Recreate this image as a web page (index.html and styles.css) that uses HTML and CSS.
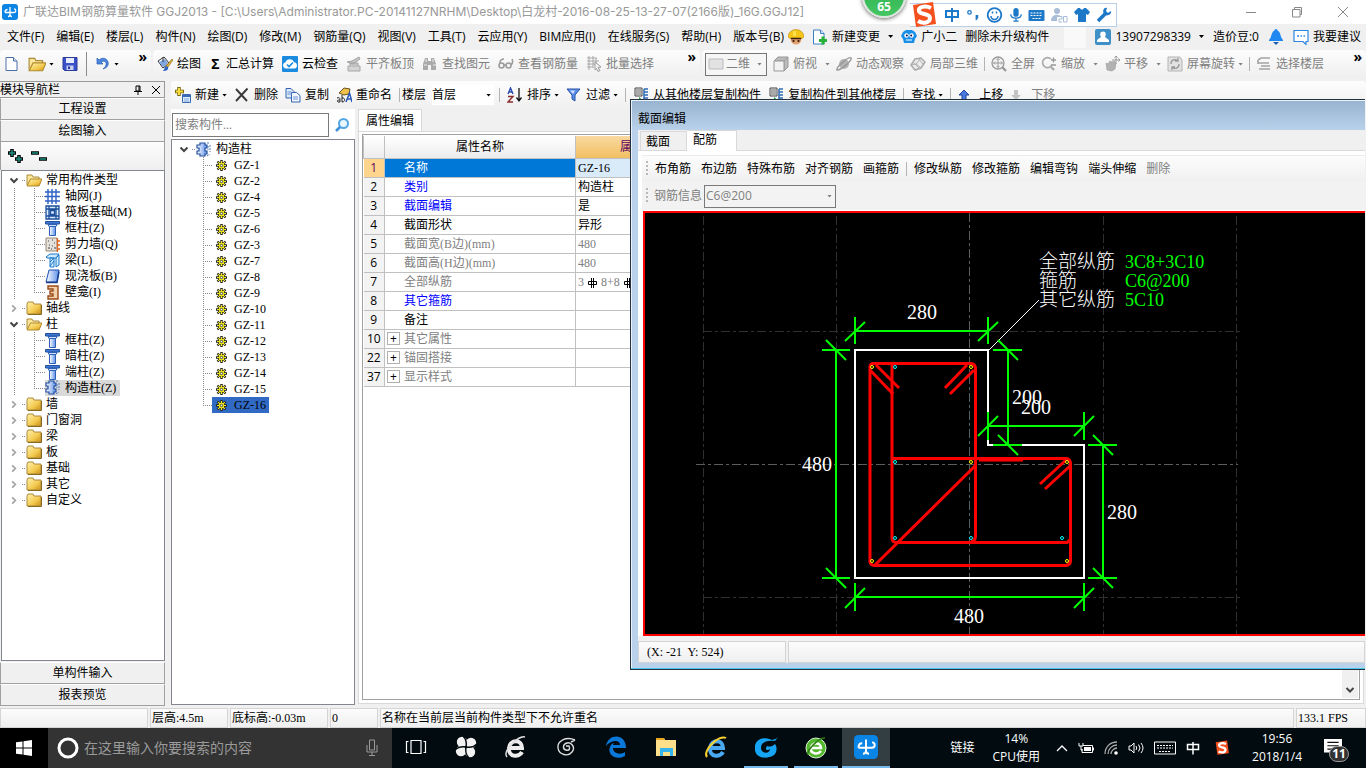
FILE: index.html
```html
<!DOCTYPE html>
<html lang="zh-CN">
<head>
<meta charset="utf-8">
<title>广联达BIM钢筋算量软件 GGJ2013</title>
<link rel="stylesheet" href="styles.css">
</head>
<body>
<svg class="defs" aria-hidden="true">
  <defs>
    <linearGradient id="gGold" x1="0" y1="0" x2="1" y2="1"><stop offset="0" stop-color="#fff3b0"/><stop offset=".6" stop-color="#f3c94e"/><stop offset="1" stop-color="#c98f1c"/></linearGradient>
    <linearGradient id="gBlue" x1="0" y1="0" x2="1" y2="0"><stop offset="0" stop-color="#fff"/><stop offset="1" stop-color="#5d8fe8"/></linearGradient>
  </defs>
  <symbol id="app" viewBox="0 0 16 16"><rect width="16" height="16" rx="3" fill="#0a85e6"/><path d="M3 8.500h9a1.800 1.800 0 0 0 0-3.600M8 3v7.500a2 2 0 0 0 2 2M3 8.500c0-2 1-3 2.500-3M8 10.500a2 2 0 0 1-2 2" fill="none" stroke="#fff" stroke-width="1.300"/></symbol>
  <symbol id="folder" viewBox="0 0 16 14"><path d="M1 3l1-2h5l1 2h7v10H1z" fill="url(#gGold)" stroke="#a98a3a"/><path d="M15.500 4v9.500H2" fill="none" stroke="#8a6a20"/></symbol>
  <symbol id="folder-open" viewBox="0 0 16 14"><path d="M1 12V2h5l1 2h6v2" fill="#fbe79a" stroke="#a98a3a"/><path d="M1 13L4.500 6H16l-3 7z" fill="url(#gGold)" stroke="#b08a2c"/></symbol>
  <symbol id="chev-d" viewBox="0 0 10 8"><path d="M1.500 2l3.500 3.500L8.500 2" fill="none" stroke="#444" stroke-width="2"/></symbol>
  <symbol id="chev-r" viewBox="0 0 8 10"><path d="M2 1.500L5.500 5 2 8.500" fill="none" stroke="#a0a0a0" stroke-width="1.800"/></symbol>
  <symbol id="grid" viewBox="0 0 15 15"><path d="M3 0v15M7 0v15M11 0v15M0 3h15M0 7.500h15M0 12h15" stroke="#2d60c4" stroke-width="1.400"/></symbol>
  <symbol id="raft" viewBox="0 0 15 15"><path d="M1 1h13v13H1zM4 1v13M11 1v13M1 4h13M1 11h13M5.500 5.500h4v4h-4z" fill="#dcebfa" stroke="#1c4f9c" stroke-width="1.300"/></symbol>
  <symbol id="column" viewBox="0 0 15 15"><path d="M.500 .500h14v2.500h-14z" fill="#3f78d0" stroke="#2450a0"/><path d="M3 3.500h9l-1 2H4z" fill="#cfe0fa" stroke="#2e60b8"/><path d="M4.500 5.500h6v9h-6z" fill="url(#gBlue)" stroke="#2e60b8"/></symbol>
  <symbol id="wall" viewBox="0 0 15 15"><path d="M1 1h11v13H1z" fill="#e4e0da" stroke="#9a8878"/><path d="M3 4h1M7 3h1M9 6h1M4 8h1M7 9h1M3 11h2M6 12h1M9 11h2" stroke="#444"/><path d="M12.500 1v14M12 4h3M12 8h3M12 12h3" stroke="#e0641c" stroke-width="1.300"/></symbol>
  <symbol id="beam" viewBox="0 0 15 15"><path d="M1 4l4-3h9l-3 4H2zM5 5h4v9H5zM11 5l3-3v10l-3 2z" fill="#cfeaff" stroke="#1c78c8"/><path d="M9 5L5 9m0 4l4-5" stroke="#1c78c8"/></symbol>
  <symbol id="slab" viewBox="0 0 15 15"><path d="M4 1h10l-2 12H1z" fill="url(#gBlue)" stroke="#1c4fb0"/><path d="M1 13.500h11l2-11" fill="none" stroke="#173f90" stroke-width="1.500"/></symbol>
  <symbol id="niche" viewBox="0 0 15 15"><path d="M3 1h10v13H3v-3h5V9H5V6h3V4H3z" fill="#f3d3ae" stroke="#9a4a18" stroke-width="1.400"/></symbol>
  <symbol id="gz" viewBox="0 0 15 15"><path d="M4 1h5v2h2v3H9v3h2v3H9v2H4v-2H1V9h2V6H1V3h3z" fill="url(#gBlue)" stroke="#234f9e" stroke-width="1.200"/><path d="M11 1h3M11 14l3-2M12 4v4M14 3v7" stroke="#4c78bc" stroke-dasharray="2 1"/></symbol>
  <symbol id="gear" viewBox="0 0 11 11"><path d="M5.500 0v11M0 5.500h11M1.500 1.500l8 8M9.500 1.500l-8 8" stroke="#222" stroke-width="2.400"/><circle cx="5.500" cy="5.500" r="3.800" fill="#222"/><path d="M5.500 1v9M1 5.500h9M2.200 2.200l6.600 6.600M8.800 2.200l-6.600 6.600" stroke="#f7ef1e" stroke-width="1.200"/><circle cx="5.500" cy="5.500" r="2.400" fill="none" stroke="#f7ef1e"/><circle cx="5.500" cy="5.500" r="1.200" fill="#fff" stroke="#222" stroke-width=".8"/></symbol>
  <symbol id="doc" viewBox="0 0 16 16"><path d="M2 1.500h7.500L13 5v9.500H2z" fill="#fff" stroke="#4a6fa8"/><path d="M9.500 1.500V5H13" fill="#dbe6f5" stroke="#4a6fa8"/></symbol>
  <symbol id="save" viewBox="0 0 16 16"><path d="M1 1.500h14v13H2.500L1 13z" fill="#3a50c8" stroke="#2a3a98"/><path d="M4 2h8v5H4z" fill="#e8ecfa"/><path d="M4.500 9.500h7V14h-7z" fill="#c7cef0"/><path d="M6 10.500h2V13H6z" fill="#2a3a98"/></symbol>
  <symbol id="undo" viewBox="0 0 16 16"><path d="M2 2v6h6L6 6c3-2 6 0 5 3-.500 2-2 3-3 4 4-1 6-4 5-7C12 2 7 1 4 4z" fill="#4d86de" stroke="#2a5cb4" stroke-width=".7"/></symbol>
  <symbol id="paint" viewBox="0 0 16 16"><path d="M1 5l6-4 5 6-6 5z" fill="#fff" stroke="#333"/><path d="M2 6l6-3 3 4-5 4z" fill="#7fa6e0"/><path d="M6 1V6" stroke="#333"/><path d="M15 3L9 10l2 1 5-7z" fill="#e9b93a" stroke="#7a5a18" stroke-width=".6"/><path d="M9 10c-2 1-1 3-3 5 3 0 6-1 5-4z" fill="#2e62c0"/></symbol>
  <symbol id="cloudcheck" viewBox="0 0 16 16"><rect width="16" height="16" rx="1" fill="#1b8be0"/><path d="M4 12.500a3.200 3.200 0 0 1-.5-6.300 4.500 4.500 0 0 1 8.500 0 3.200 3.200 0 0 1 .5 6.300z" fill="#fff"/><path d="M5 8.500l2 2 4-4" stroke="#1b8be0" stroke-width="1.600" fill="none"/></symbol>
  <symbol id="g-align" viewBox="0 0 16 16"><path d="M2 10h12v5H2z" fill="#d4d4d4" stroke="#a6a6a6"/><path d="M4 10V7h8v3M1 6l5-1 7-4 1 2-7 5z" fill="#c4c4c4" stroke="#a6a6a6"/></symbol>
  <symbol id="g-find" viewBox="0 0 16 16"><path d="M3 2h3v3h3V2h3l2 6v6H9V9H6v5H1V8z" fill="#aaa"/><path d="M2 9h3M11 9h3M4 3v3M11 3v3" stroke="#eee"/></symbol>
  <symbol id="g-glasses" viewBox="0 0 16 16"><g fill="none" stroke="#9c9c9c" stroke-width="1.600"><circle cx="3.500" cy="9.500" r="2.500"/><circle cx="10.500" cy="9.500" r="2.500"/><path d="M6 9h2M2 7c0-3 2-4 4-4M13 9c2-2 2-4 1-6"/></g></symbol>
  <symbol id="g-batch" viewBox="0 0 16 16"><path d="M1 2h10M1 5h12M1 8h10M1 11h6M3 0v14M7 0v12M10 2v5" stroke="#a8a8a8"/><path d="M9 6l6 5-3 .5 2 3-2 1-1.500-3L9 14z" fill="#f4f4f4" stroke="#999"/></symbol>
  <symbol id="g-rect" viewBox="0 0 16 16"><path d="M1 3h14v10H1z" fill="#e2e2e2" stroke="#bbb"/></symbol>
  <symbol id="g-cube" viewBox="0 0 16 16"><path d="M1 5l4-4h10l-4 4zM11 5l4-4v10l-4 4z" fill="#bbb" stroke="#999"/><path d="M1 5h10v10H1z" fill="#f2f2f2" stroke="#999"/></symbol>
  <symbol id="g-orbit" viewBox="0 0 16 16"><circle cx="8" cy="8" r="5" fill="#b4b4b4"/><path d="M1 14C0 11 13 0 15 2s-11 13-14 12z" fill="none" stroke="#999" stroke-width="1.500"/></symbol>
  <symbol id="g-part" viewBox="0 0 16 16"><path d="M1 9l4-6 6-1 4 4-4 6-6 2z" fill="#ececec" stroke="#aaa" stroke-width="1.500"/><path d="M1 9l5-1 5-6M6 8l5 4M3 6l6 6M8 2l5 6" stroke="#b0b0b0" fill="none"/></symbol>
  <symbol id="g-full" viewBox="0 0 16 16"><circle cx="7" cy="7" r="6" fill="#f5f5f5" stroke="#999" stroke-width="1.300"/><path d="M7 2.500v9M2.500 7h9M5.500 4L7 2.500 8.500 4M5.500 10L7 11.500 8.500 10M4 5.500L2.500 7 4 8.500M10 5.500L11.500 7 10 8.500" fill="none" stroke="#999"/><path d="M11.500 11.500L15 15" stroke="#999" stroke-width="2.400"/></symbol>
  <symbol id="g-zoom" viewBox="0 0 16 16"><path d="M10 3a5 5 0 1 0 1 6" fill="none" stroke="#aaa" stroke-width="1.600"/><path d="M10 11l3 3" stroke="#aaa" stroke-width="2.400"/><path d="M10 4h5M12.500 1.500v5M10 9h5" stroke="#999" stroke-width="1.300"/></symbol>
  <symbol id="g-pan" viewBox="0 0 16 16"><path d="M2 7l2 1 2-3 2 1 2-1 2 2-1 6-3 2-5-1z" fill="#b2b2b2" stroke="#999" stroke-width=".6"/><path d="M12 0v8M8 4h8M10.500 1.500L12 0l1.500 1.500M14.500 2.500L16 4l-1.500 1.500" stroke="#999" fill="none"/></symbol>
  <symbol id="g-rot" viewBox="0 0 16 16"><path d="M1 1h12l2 3v11H1z" fill="#e2e2e2" stroke="#b4b4b4"/><path d="M4 8a4 4 0 0 1 7-3M12 8a4 4 0 0 1-7 3M11 2v3H8M5 14v-3h3" fill="none" stroke="#999" stroke-width="1.300"/></symbol>
  <symbol id="g-floors" viewBox="0 0 16 16"><path d="M2 4l3-2h9M2 7h11M5 10h9M3 13h11M2 4v4" fill="none" stroke="#a4a4a4" stroke-width="1.600"/></symbol>
  <symbol id="newitem" viewBox="0 0 16 16"><path d="M4 0v9M0 4.500h9" stroke="#7a6a10" stroke-width="3.500"/><path d="M4 1v7M1 4.500h7" stroke="#f6dc3c" stroke-width="2"/><path d="M7.500 7.500h8v8h-8z" fill="#dcecff" stroke="#3a6ab4"/><path d="M8 9h7" stroke="#3a6ab4" stroke-width="2"/><path d="M9 12h5M9 14h5" stroke="#7fa4d8"/></symbol>
  <symbol id="del" viewBox="0 0 16 16"><path d="M2 2l11 12M13.500 1.500L2 14" stroke="#3a3a3a" stroke-width="1.900"/></symbol>
  <symbol id="copy" viewBox="0 0 16 16"><path d="M1 1.500h5l3 3V11H1z" fill="#dbe8fa" stroke="#3664b0"/><path d="M6.500 5.500h5l3.500 3V15H6.500z" fill="#f2f7ff" stroke="#3664b0"/><path d="M2.500 5h4M2.500 7h4M8 10h5M8 12h5" stroke="#6c94d4"/></symbol>
  <symbol id="rename" viewBox="0 0 16 16"><path d="M3 6l5-5 6 1-1 5-5 1z" fill="#eec04a" stroke="#6a5020"/><path d="M10 15l3.500-9L16 15M11 12h4" fill="none" stroke="#2a58b8" stroke-width="1.500"/><path d="M1 11c3-1 3 0 3 4H2c-2-2 1-2 2-2M6 8v7c4 0 3-5 0-4" fill="none" stroke="#222"/></symbol>
  <symbol id="sort" viewBox="0 0 16 16"><path d="M1 7l2.500-6L6 7M2 5h3" fill="none" stroke="#2a4cb0" stroke-width="1.400"/><path d="M1 9.500h5l-5 5.500h5" fill="none" stroke="#8a2c2c" stroke-width="1.400"/><path d="M12 1v12M9.500 10.500L12 14l2.500-3.500" fill="none" stroke="#111" stroke-width="1.300"/></symbol>
  <symbol id="filter" viewBox="0 0 16 16"><path d="M1 2h13L9 8v6l-3-2V8z" fill="#5a8ee8" stroke="#2550a8"/><path d="M4 3.500h5L7 7z" fill="#cfe0ff"/></symbol>
  <symbol id="floorcopy" viewBox="0 0 16 16"><path d="M2 1h7v8H2z" fill="#eee" stroke="#444"/><path d="M3 3h5M3 5h5M3 7h5" stroke="#666"/><path d="M11 2h4M11 5h4M11 8h4M11 11h4M11 14h4M11 2v12" stroke="#2f6cb4" stroke-width="1.500"/><path d="M1 13h5V10l4 3.500L6 16z" fill="#18a038"/></symbol>
  <symbol id="up" viewBox="0 0 12 12"><path d="M6 1l5 5H8v5H4V6H1z" fill="#4a7ae0" stroke="#1f449c"/></symbol>
  <symbol id="down" viewBox="0 0 12 12"><path d="M6 11L1 6h3V1h4v5h3z" fill="#c4c4c4"/></symbol>
  <symbol id="magn" viewBox="0 0 16 16"><circle cx="9.500" cy="6.500" r="4.500" fill="#e8f6ff" stroke="#52a6e4" stroke-width="2"/><path d="M6 10l-4 4" stroke="#3c90d8" stroke-width="2.500"/></symbol>
  <symbol id="worker" viewBox="0 0 16 16"><circle cx="8" cy="10" r="5.500" fill="#e0a070"/><path d="M0 8a8 7.500 0 0 1 16 0l-2 1.500H2z" fill="#f5c518" stroke="#b8860b" stroke-width=".6"/><path d="M5 2h3v5H5z" fill="#ffe14a"/><path d="M3 9.500h10" stroke="#3a1d10" stroke-width="1.500"/><path d="M5.500 11v2M10.500 11v2" stroke="#3a1d10" stroke-width="1.800"/></symbol>
  <symbol id="docplus" viewBox="0 0 16 16"><path d="M1.500 1h7L12 4.500V15H1.500z" fill="#fff" stroke="#3b7fc4"/><path d="M8.500 1v3.500H12" fill="#cfe2f5" stroke="#3b7fc4"/><path d="M11 7.500v8M7 11.500h8" stroke="#27b137" stroke-width="3"/></symbol>
  <symbol id="mascot" viewBox="0 0 16 16"><path d="M2 3l3-2h6l3 2 2 4-2 3-1 4H3L2 10 0 7z" fill="#1a8fe8"/><circle cx="5.500" cy="6.500" r="2.200" fill="#fff"/><circle cx="10.500" cy="6.500" r="2.200" fill="#fff"/><circle cx="5.800" cy="6.500" r="1" fill="#114"/><circle cx="10.200" cy="6.500" r="1" fill="#114"/><path d="M5 11h6" stroke="#fff"/></symbol>
  <symbol id="person" viewBox="0 0 16 16"><rect width="16" height="16" rx="2" fill="#3f8fc8"/><path d="M8 2.500c3 0 3.500 3 2 5.500L14 11v2H2v-2l4-3c-1.500-2.500-1-5.500 2-5.500z" fill="#fff"/></symbol>
  <symbol id="bell" viewBox="0 0 16 16"><path d="M8 0c1 0 1.500 1 1.500 1.500C13 3 12 8 15 11v1H1v-1C4 8 3 3 6.500 1.500 6.500 1 7 0 8 0z" fill="#1f87f0"/><path d="M5 13h6l-3 3z" fill="#1f5fb0"/></symbol>
  <symbol id="chat" viewBox="0 0 16 16"><path d="M1 1.500h14v11H13v3l-3-3H1z" fill="#fff" stroke="#2b86e4" stroke-width="1.200"/><path d="M4 7h2M7.500 7h1.500M10.500 7H12" stroke="#2b86e4" stroke-width="1.500"/></symbol>
  <symbol id="sogou" viewBox="0 0 28 28"><path d="M3 4L23 1l3 22-20 3z" fill="#f4511e"/><path d="M21 7C15 4 8 6 9 10s11 2 11 7-7 6-12 3" fill="none" stroke="#fff" stroke-width="4"/></symbol>
</svg>

<header class="titlebar">
  <svg class="i16"><use href="#app"/></svg>
  <span class="title">广联达BIM钢筋算量软件 GGJ2013 - [C:\Users\Administrator.PC-20141127NRHM\Desktop\白龙村-2016-08-25-13-27-07(2166版)_16G.GGJ12]</span>
  <button class="win" aria-label="最小化"><svg viewBox="0 0 12 12" width="12" height="12"><path d="M1 6.500h10" stroke="#888"/></svg></button>
  <button class="win" aria-label="还原"><svg viewBox="0 0 12 12" width="12" height="12"><path d="M3.500 3V1.500h7v7H9M1.500 3.500H9V11H1.500z" fill="none" stroke="#888"/></svg></button>
  <button class="win" aria-label="关闭"><svg viewBox="0 0 12 12" width="12" height="12"><path d="M1 1l10 10M11 1L1 11" stroke="#888"/></svg></button>
</header>

<nav class="menubar">
  <div class="menus"><button>文件(F)</button><button>编辑(E)</button><button>楼层(L)</button><button>构件(N)</button><button>绘图(D)</button><button>修改(M)</button><button>钢筋量(Q)</button><button>视图(V)</button><button>工具(T)</button><button>云应用(Y)</button><button>BIM应用(I)</button><button>在线服务(S)</button><button>帮助(H)</button><button>版本号(B)</button></div>
  <div class="extras">
    <svg class="i16"><use href="#worker"/></svg>
    <button class="tb"><svg class="i16"><use href="#docplus"/></svg>新建变更<i class="caret wide"></i></button>
    <button class="tb"><svg class="i16"><use href="#mascot"/></svg>广小二</button>
    <button>删除未升级构件</button>
  </div>
  <div class="account">
    <button class="tb"><svg class="i16"><use href="#person"/></svg>13907298339<i class="caret wide"></i></button>
    <button>造价豆:0</button>
    <svg class="i16"><use href="#bell"/></svg>
    <button class="tb"><svg class="i16"><use href="#chat"/></svg>我要建议</button>
  </div>
</nav>

<div class="bars">
  <div class="bar bar-file">
    <button class="tb" aria-label="新建"><svg class="i16"><use href="#doc"/></svg></button>
    <button class="tb" aria-label="打开"><svg class="i18"><use href="#folder-open"/></svg><i class="caret"></i></button>
    <button class="tb" aria-label="保存"><svg class="i16"><use href="#save"/></svg></button>
    <i class="sep tall"></i>
    <button class="tb" aria-label="撤销"><svg class="i16"><use href="#undo"/></svg><i class="caret"></i></button>
    <span class="more">»</span>
  </div>
  <div class="bar bar-edit">
    <button class="tb"><svg class="i16"><use href="#paint"/></svg>绘图</button>
    <button class="tb"><b class="sigma">Σ</b>汇总计算</button>
    <button class="tb"><svg class="i16"><use href="#cloudcheck"/></svg>云检查</button>
    <button class="tb" disabled><svg class="i16"><use href="#g-align"/></svg>平齐板顶</button>
    <button class="tb" disabled><svg class="i16"><use href="#g-find"/></svg>查找图元</button>
    <button class="tb" disabled><svg class="i16"><use href="#g-glasses"/></svg>查看钢筋量</button>
    <button class="tb" disabled><svg class="i16"><use href="#g-batch"/></svg>批量选择</button>
    <span class="more">»</span>
  </div>
  <div class="bar bar-view">
    <label class="combo dim"><svg class="i16"><use href="#g-rect"/></svg><select aria-label="视图模式" disabled><option>二维</option></select><i class="caret"></i></label>
    <button class="tb" disabled><svg class="i16"><use href="#g-cube"/></svg>俯视<i class="caret wide"></i></button>
    <button class="tb" disabled><svg class="i16"><use href="#g-orbit"/></svg>动态观察</button>
    <button class="tb" disabled><svg class="i16"><use href="#g-part"/></svg>局部三维</button>
    <i class="sep"></i>
    <button class="tb" disabled><svg class="i16"><use href="#g-full"/></svg>全屏</button>
    <button class="tb" disabled><svg class="i16"><use href="#g-zoom"/></svg>缩放<i class="caret wide"></i></button>
    <button class="tb" disabled><svg class="i16"><use href="#g-pan"/></svg>平移<i class="caret wide"></i></button>
    <button class="tb" disabled><svg class="i16"><use href="#g-rot"/></svg>屏幕旋转<i class="caret"></i></button>
    <i class="sep"></i>
    <button class="tb" disabled><svg class="i16"><use href="#g-floors"/></svg>选择楼层</button>
    <span class="more">»</span>
  </div>
</div>

<main class="work">
  <aside class="nav song">
    <div class="nav-head"><span>模块导航栏</span>
      <svg class="pin" viewBox="0 0 10 10" width="10" height="10"><path d="M3 1h4v5H3zM6 1v5M1 6.500h8M5 7v3" fill="none" stroke="#000"/></svg>
      <svg viewBox="0 0 10 10" width="10" height="10"><path d="M1 1l8 8M9 1L1 9" stroke="#000"/></svg></div>
    <button class="nav-btn">工程设置</button>
    <button class="nav-btn">绘图输入</button>
    <div class="nav-tools"><svg viewBox="0 0 40 16" width="40" height="16"><path d="M1 5h8M5 1v8M8 11h8M12 7v8M24 5h8M32 11h8" stroke="#000" stroke-width="3.500"/><path d="M2 5h6M5 2v6M9 11h6M12 8v6M25 5h6M33 11h6" stroke="#1b8f80" stroke-width="1.500"/></svg></div>
    <ul class="tree nav-tree">
      <li class="l1"><svg class="chev"><use href="#chev-d"/></svg><i class="dot"></i><svg class="fold"><use href="#folder-open"/></svg>常用构件类型</li>
      <li class="l2"><i class="stub"></i><svg class="i15"><use href="#grid"/></svg><span>轴网(J)</span></li>
      <li class="l2"><i class="stub"></i><svg class="i15"><use href="#raft"/></svg><span>筏板基础(M)</span></li>
      <li class="l2"><i class="stub"></i><svg class="i15"><use href="#column"/></svg><span>框柱(Z)</span></li>
      <li class="l2"><i class="stub"></i><svg class="i15"><use href="#wall"/></svg><span>剪力墙(Q)</span></li>
      <li class="l2"><i class="stub"></i><svg class="i15"><use href="#beam"/></svg><span>梁(L)</span></li>
      <li class="l2"><i class="stub"></i><svg class="i15"><use href="#slab"/></svg><span>现浇板(B)</span></li>
      <li class="l2"><i class="stub last"></i><svg class="i15"><use href="#niche"/></svg><span>壁龛(I)</span></li>
      <li class="l1"><svg class="chev"><use href="#chev-r"/></svg><i class="dot"></i><svg class="fold"><use href="#folder"/></svg>轴线</li>
      <li class="l1"><svg class="chev"><use href="#chev-d"/></svg><i class="dot"></i><svg class="fold"><use href="#folder-open"/></svg>柱</li>
      <li class="l2"><i class="stub"></i><svg class="i15"><use href="#column"/></svg><span>框柱(Z)</span></li>
      <li class="l2"><i class="stub"></i><svg class="i15"><use href="#column"/></svg><span>暗柱(Z)</span></li>
      <li class="l2"><i class="stub"></i><svg class="i15"><use href="#column"/></svg><span>端柱(Z)</span></li>
      <li class="l2"><i class="stub last"></i><span class="hot"><svg class="i15"><use href="#gz"/></svg><span>构造柱(Z)</span></span></li>
      <li class="l1"><svg class="chev"><use href="#chev-r"/></svg><i class="dot"></i><svg class="fold"><use href="#folder"/></svg>墙</li>
      <li class="l1"><svg class="chev"><use href="#chev-r"/></svg><i class="dot"></i><svg class="fold"><use href="#folder"/></svg>门窗洞</li>
      <li class="l1"><svg class="chev"><use href="#chev-r"/></svg><i class="dot"></i><svg class="fold"><use href="#folder"/></svg>梁</li>
      <li class="l1"><svg class="chev"><use href="#chev-r"/></svg><i class="dot"></i><svg class="fold"><use href="#folder"/></svg>板</li>
      <li class="l1"><svg class="chev"><use href="#chev-r"/></svg><i class="dot"></i><svg class="fold"><use href="#folder"/></svg>基础</li>
      <li class="l1"><svg class="chev"><use href="#chev-r"/></svg><i class="dot"></i><svg class="fold"><use href="#folder"/></svg>其它</li>
      <li class="l1"><svg class="chev"><use href="#chev-r"/></svg><i class="dot"></i><svg class="fold"><use href="#folder"/></svg>自定义</li>
    </ul>
    <button class="nav-btn">单构件输入</button>
    <button class="nav-btn">报表预览</button>
  </aside>

  <section class="right">
    <div class="bar bar-comp">
      <button class="tb"><svg class="i16"><use href="#newitem"/></svg>新建<i class="caret"></i></button>
      <button class="tb"><svg class="i16"><use href="#del"/></svg>删除</button>
      <button class="tb"><svg class="i16"><use href="#copy"/></svg>复制</button>
      <button class="tb"><svg class="i16"><use href="#rename"/></svg>重命名</button>
      <i class="sep"></i>
      <label class="floor">楼层<span class="combo plain"><select><option>首层</option></select><i class="caret"></i></span></label>
      <i class="sep"></i>
      <button class="tb"><svg class="i16"><use href="#sort"/></svg>排序<i class="caret"></i></button>
      <button class="tb"><svg class="i16"><use href="#filter"/></svg>过滤<i class="caret"></i></button>
      <i class="sep"></i>
      <button class="tb"><svg class="i16"><use href="#floorcopy"/></svg>从其他楼层复制构件</button>
      <button class="tb"><svg class="i16"><use href="#floorcopy"/></svg>复制构件到其他楼层</button>
      <i class="sep"></i>
      <button class="tb">查找<i class="caret"></i></button>
      <i class="sep"></i>
      <button class="tb move"><svg class="i12"><use href="#up"/></svg>上移</button>
      <button class="tb move" disabled><svg class="i12"><use href="#down"/></svg>下移</button>
    </div>
    <div class="panes">
      <div class="complist song">
        <div class="search"><input type="text" aria-label="搜索构件" placeholder="搜索构件..."><button aria-label="搜索"><svg class="i16"><use href="#magn"/></svg></button></div>
        <ul class="tree comp-tree">
          <li class="l1"><svg class="chev"><use href="#chev-d"/></svg><i class="dot"></i><svg class="i15"><use href="#gz"/></svg>构造柱</li>
          <li class="c2"><i class="stub"></i><span><svg class="i11"><use href="#gear"/></svg>GZ-1</span></li>
          <li class="c2"><i class="stub"></i><span><svg class="i11"><use href="#gear"/></svg>GZ-2</span></li>
          <li class="c2"><i class="stub"></i><span><svg class="i11"><use href="#gear"/></svg>GZ-4</span></li>
          <li class="c2"><i class="stub"></i><span><svg class="i11"><use href="#gear"/></svg>GZ-5</span></li>
          <li class="c2"><i class="stub"></i><span><svg class="i11"><use href="#gear"/></svg>GZ-6</span></li>
          <li class="c2"><i class="stub"></i><span><svg class="i11"><use href="#gear"/></svg>GZ-3</span></li>
          <li class="c2"><i class="stub"></i><span><svg class="i11"><use href="#gear"/></svg>GZ-7</span></li>
          <li class="c2"><i class="stub"></i><span><svg class="i11"><use href="#gear"/></svg>GZ-8</span></li>
          <li class="c2"><i class="stub"></i><span><svg class="i11"><use href="#gear"/></svg>GZ-9</span></li>
          <li class="c2"><i class="stub"></i><span><svg class="i11"><use href="#gear"/></svg>GZ-10</span></li>
          <li class="c2"><i class="stub"></i><span><svg class="i11"><use href="#gear"/></svg>GZ-11</span></li>
          <li class="c2"><i class="stub"></i><span><svg class="i11"><use href="#gear"/></svg>GZ-12</span></li>
          <li class="c2"><i class="stub"></i><span><svg class="i11"><use href="#gear"/></svg>GZ-13</span></li>
          <li class="c2"><i class="stub"></i><span><svg class="i11"><use href="#gear"/></svg>GZ-14</span></li>
          <li class="c2"><i class="stub"></i><span><svg class="i11"><use href="#gear"/></svg>GZ-15</span></li>
          <li class="c2"><i class="stub last"></i><span class="sel"><svg class="i11"><use href="#gear"/></svg>GZ-16</span></li>
        </ul>
      </div>
      <div class="props song">
        <button class="ptab">属性编辑</button>
        <div class="ppanel">
          <div class="pbox">
            <table>
              <thead><tr><th class="n"></th><th class="k">属性名称</th><th class="v">属性值</th></tr></thead>
              <tbody>
                <tr class="cur"><th>1</th><td>名称</td><td>GZ-16</td></tr>
                <tr class="blue"><th>2</th><td>类别</td><td>构造柱</td></tr>
                <tr class="blue"><th>3</th><td>截面编辑</td><td>是</td></tr>
                <tr><th>4</th><td>截面形状</td><td>异形</td></tr>
                <tr class="gray"><th>5</th><td>截面宽(B边)(mm)</td><td>480</td></tr>
                <tr class="gray"><th>6</th><td>截面高(H边)(mm)</td><td>480</td></tr>
                <tr class="gray"><th>7</th><td>全部纵筋</td><td>3 <svg class="rebar" viewBox="0 0 11 10"><path d="M1.500 3.500h8v3h-8zM4.500 0v10M6.500 0v10" fill="none" stroke="#000"/></svg> 8+8 <svg class="rebar" viewBox="0 0 11 10"><path d="M1.500 3.500h8v3h-8zM4.500 0v10M6.500 0v10" fill="none" stroke="#000"/></svg> 10</td></tr>
                <tr class="blue"><th>8</th><td>其它箍筋</td><td></td></tr>
                <tr><th>9</th><td>备注</td><td></td></tr>
                <tr class="gray grp"><th>10</th><td><button aria-label="展开">+</button>其它属性</td><td></td></tr>
                <tr class="gray grp"><th>22</th><td><button aria-label="展开">+</button>锚固搭接</td><td></td></tr>
                <tr class="gray grp"><th>37</th><td><button aria-label="展开">+</button>显示样式</td><td></td></tr>
              </tbody>
            </table>
            <div class="vscroll"><svg viewBox="0 0 10 8" width="10" height="8"><use href="#chev-d"/></svg></div>
          </div>
        </div>
      </div>
    </div>
  </section>
</main>

<footer class="status song"><span class="s1"></span><span class="s2">层高:4.5m</span><span class="s3">底标高:-0.03m</span><span class="s4">0</span><span class="s5">名称在当前层当前构件类型下不允许重名</span><span class="s6">133.1 FPS</span></footer>

<section class="dialog" role="dialog" aria-label="截面编辑">
  <h2>截面编辑</h2>
  <div class="dbody">
    <div class="dtabs song"><button>截面</button><button class="on">配筋</button></div>
    <div class="dpage">
      <div class="dbar top"><i class="grip"></i><button>布角筋</button><button>布边筋</button><button>特殊布筋</button><button>对齐钢筋</button><button>画箍筋</button><i class="sep"></i><button>修改纵筋</button><button>修改箍筋</button><button>编辑弯钩</button><button>端头伸缩</button><button disabled>删除</button></div>
      <div class="dbar low"><i class="grip"></i><label for="rebar">钢筋信息</label><span class="combo rb"><select id="rebar" disabled><option>C6@200</option></select><i class="caret"></i></span></div>
      <div class="canvas">
        <svg viewBox="645 213 720 421" preserveAspectRatio="xMinYMin slice">
          <g class="axis">
            <path d="M703.500 216V634M836.500 216V634M1103.500 216V634M1236.500 216V634M703 331.500H1243M703 597.500H1243"/>
            <path class="mid" d="M969.500 213V634M696 464.500H1238"/>
          </g>
          <path class="outline" d="M855 350H988V445H1084V578H855Z"/>
          <path class="leader" d="M989 350L1039 300"/>
          <g class="dim">
            <path d="M855 331H988M855 317V344M988 317V344M845 341L865 322M978 341L998 322"/>
            <path d="M836 350V578M822 350H850M822 578H850M826 340L846 360M826 568L846 588"/>
            <path d="M1008 350V445M993 350H1022M993 445H1022M998 340L1018 360M998 435L1018 455"/>
            <path d="M988 426H1084M988 412V440M1084 412V440M978 436L998 416M1074 436L1094 416"/>
            <path d="M1103 445V578M1088 445H1117M1088 578H1117M1093 435L1113 455M1093 568L1113 588"/>
            <path d="M855 597H1084M855 583V611M1084 583V611M845 608L865 588M1074 608L1094 588"/>
          </g>
          <g class="steel">
            <path d="M870 562V367Q870 363 874 363.500H971Q975 364 975.500 368V537Q975 541 971 542"/>
            <path d="M892 364V538Q892 542 896 542.500H1067L1070 540"/>
            <path d="M892 458.500H1066Q1070 459 1070.500 463V561Q1070 565 1066 565.500H874Q870 565 870 561"/>
            <path d="M875 565L975 466M979 460H1023M870 370L893 394M876 365L899 388M967 365L945 388M974 370L950 394M1066 460L1040 484M1070 466L1045 489"/>
          </g>
          <g class="dots y"><circle cx="872" cy="367" r="1.500"/><circle cx="971" cy="367" r="1.500"/><circle cx="971" cy="462" r="1.500"/><circle cx="1067" cy="462" r="1.500"/><circle cx="872" cy="561" r="1.500"/><circle cx="1067" cy="561" r="1.500"/></g>
          <g class="dots c"><circle cx="895" cy="367" r="1.500"/><circle cx="895" cy="462" r="1.500"/><circle cx="895" cy="538" r="1.500"/><circle cx="971" cy="538" r="1.500"/><circle cx="1062" cy="538" r="1.500"/></g>
          <g class="num"><text x="907" y="319">280</text><text x="802" y="471">480</text><text x="1012" y="404">200</text><text x="1021" y="414">200</text><text x="1107" y="519">280</text><text x="954" y="623">480</text></g>
          <g class="lab"><text x="1039" y="268">全部纵筋</text><text x="1039" y="287">箍筋</text><text x="1039" y="306">其它纵筋</text></g>
          <g class="val"><text x="1125" y="268">3C8+3C10</text><text x="1125" y="287">C6@200</text><text x="1125" y="306">5C10</text></g>
        </svg>
      </div>
      <div class="dstatus song"><span>(X: -21  Y: 524)</span><span></span></div>
    </div>
  </div>
</section>

<div class="ball">65</div>
<div class="ime">
  <svg viewBox="0 0 28 28" width="28" height="28"><use href="#sogou"/></svg>
  <svg viewBox="0 0 16 16" width="16" height="16"><path d="M2 4h12v6H2zM8 1v14" fill="none" stroke="#1e78c8" stroke-width="2"/></svg>
  <svg viewBox="0 0 16 16" width="14" height="16"><circle cx="4" cy="5" r="2" fill="none" stroke="#1e78c8" stroke-width="1.500"/><path d="M11 8h3v3l-2 3h-1z" fill="#1e78c8"/></svg>
  <svg viewBox="0 0 16 16" width="17" height="16"><circle cx="8" cy="8" r="6.800" fill="none" stroke="#1e78c8" stroke-width="1.800"/><path d="M4.500 9a3.500 3.500 0 0 0 7 0M6 4.500v2M10 4.500v2" fill="none" stroke="#1e78c8" stroke-width="1.500"/></svg>
  <svg viewBox="0 0 16 16" width="14" height="16"><rect x="5" y="0" width="6" height="10" rx="3" fill="#1e78c8"/><path d="M2 7c0 6 12 6 12 0M8 12v3M5 15h6" fill="none" stroke="#1e78c8" stroke-width="1.500"/></svg>
  <svg viewBox="0 0 16 16" width="17" height="16"><rect y="3" width="16" height="11" rx="1" fill="#1e78c8"/><path d="M2 6h12M2 8.500h12M4 11.500h8" stroke="#fff" stroke-dasharray="2 1"/></svg>
  <svg viewBox="0 0 17 16" width="17" height="16"><circle cx="6" cy="4" r="3" fill="#a9bdd8"/><path d="M0 14c0-7 8-8 10-4H6v4z" fill="#a9bdd8"/><path d="M8 9.500h3v2.500H8v3h3M12.500 9.500h3.500v5.500h-3.500z" fill="none" stroke="#a9bdd8"/></svg>
  <svg viewBox="0 0 16 16" width="16" height="16"><path d="M0 5l4-4h2c1 2 3 2 4 0h2l4 4-2 3-2-1v8H4V7L2 8z" fill="#1e78c8"/></svg>
  <svg viewBox="0 0 16 16" width="16" height="16"><path d="M2 14l7-7" stroke="#1e78c8" stroke-width="3.500"/><path d="M15 4l-3 2-2-2 1-3C8 0 6 4 8 7s8 1 7-3z" fill="#1e78c8"/></svg>
</div>

<footer class="taskbar">
  <button class="start" aria-label="开始"><svg viewBox="0 0 16 16" width="16" height="16"><path d="M0 2.300L6.500 1.400v6.100H0zM7.500 1.200L16 0v7.500H7.500zM0 8.500h6.500v6.100L0 13.700zM7.500 8.500H16V16l-8.500-1.200z" fill="#fff"/></svg></button>
  <label class="tsearch"><svg viewBox="0 0 22 22" width="22" height="22"><circle cx="11" cy="11" r="9" fill="none" stroke="#fff" stroke-width="3"/></svg><input type="text" aria-label="搜索" placeholder="在这里输入你要搜索的内容"><svg viewBox="0 0 12 18" width="12" height="18"><path d="M3.500 1h5v10h-5zM1 6v7h10V6M6 13v4M3 16.500h6" fill="none" stroke="#9a9a9a"/></svg></label>
  <nav class="apps">
    <button aria-label="任务视图"><svg viewBox="0 0 22 16" width="22" height="16"><path d="M6 1.500h10v13H6zM3.500 2.500H1.500v11h2M18.500 2.500h2v11h-2" fill="none" stroke="#fff" stroke-width="1.200"/></svg></button>
    <button aria-label="风车"><svg viewBox="0 0 24 24" width="24" height="24"><g fill="#f2f2f2"><circle cx="8" cy="7" r="5.200"/><circle cx="17" cy="8" r="5.200"/><circle cx="16" cy="17" r="5.200"/><circle cx="7" cy="16" r="5.200"/></g><path d="M12 12C13 7 11 3 9 1M12 12c5 1 9-1 11-3M12 12c-1 5 1 9 3 11M12 12C7 11 3 13 1 15" fill="none" stroke="#02090d" stroke-width="1.400"/></svg></button>
    <button aria-label="浏览器"><svg viewBox="0 0 24 24" width="24" height="24"><path d="M7 13h11c0-9-12-9-13 0s10 10 13 4" fill="none" stroke="#eee" stroke-width="4"/><path d="M3 22C-2 16 15 0 21 2" fill="none" stroke="#ddd" stroke-width="1.500"/></svg></button>
    <button aria-label="广联达"><svg viewBox="0 0 24 24" width="24" height="24"><path d="M21 5C12 1 3 6 4 13s10 9 14 4-1-10-5-9-5 6-1 7 4-2 3-4h-3M21 5l-4 2" fill="none" stroke="#ddd" stroke-width="1.400"/></svg></button>
    <button aria-label="Edge"><svg viewBox="0 0 24 24" width="24" height="24"><path d="M2 11C4-2 22-2 22 13H9c0 6 8 7 12 4v4c-9 5-18-1-15-9 1-3 3-4 4-4-1 1-1 2-1 2h7c0-6-9-5-14 1z" fill="#0a78d8"/></svg></button>
    <button aria-label="文件夹"><svg viewBox="0 0 24 24" width="24" height="24"><path d="M2 3h8l1 2h11v16H2z" fill="#ffe08a"/><path d="M2 3h8l1 2H2z" fill="#e9a820"/><path d="M6 13h13v8h-3v-4h-7v4H6z" fill="#35b3ea"/></svg></button>
    <button aria-label="IE"><svg viewBox="0 0 24 24" width="24" height="24"><path d="M7 13h12c0-9-12-9-13 0s10 10 13 4" fill="none" stroke="#4aa8f0" stroke-width="4"/><path d="M3 22C-2 16 15-1 22 3" fill="none" stroke="#f8d030" stroke-width="2"/></svg></button>
    <button class="run" aria-label="广联达 G"><svg viewBox="0 0 24 24" width="24" height="24"><path d="M24 2c-3 3-4 2-6 3C8 0 0 6 1 13c-1 9 10 11 14 9 8-1 9-9 6-13-3 3-6 3-8 2-3 4 1 5 3 3 0 5-9 5-9-1 0-7 8-8 14-7z" fill="#16a4f4"/></svg></button>
    <button class="run" aria-label="360浏览器"><svg viewBox="0 0 24 24" width="24" height="24"><circle cx="12" cy="13" r="10" fill="#54b82e" stroke="#d9f5cf"/><path d="M8 13h9c0-6-9-6-10 0s7 7 10 3" fill="none" stroke="#fff" stroke-width="2.500"/><path d="M4 20C2 16 15 2 21 3" fill="none" stroke="#2e7d12" stroke-width="1.500"/></svg></button>
    <button class="run on" aria-label="GGJ2013"><svg viewBox="0 0 16 16" width="24" height="24"><use href="#app"/></svg></button>
  </nav>
  <div class="tray">
    <span class="link">链接</span>
    <span class="two">14%<br>CPU使用</span>
    <svg viewBox="0 0 12 8" width="12" height="8"><path d="M1 7l5-5 5 5" fill="none" stroke="#fff" stroke-width="1.300"/></svg>
    <svg viewBox="0 0 16 12" width="16" height="12"><path d="M5 3.500h9.500v7H4V7M15.500 5.500v3M1 1v3h4V1M3 4v4h2" fill="none" stroke="#fff"/><path d="M6 5h7v4H6z" fill="#fff"/></svg>
    <svg viewBox="0 0 14 14" width="14" height="14"><path d="M1 13C1 6 6 1 13 1M4 13c0-5 4-9 9-9M7 13c0-3 3-6 6-6" fill="none" stroke="#aaa" stroke-width="1.300"/><circle cx="12" cy="12" r="1.800" fill="#fff"/></svg>
    <svg viewBox="0 0 16 14" width="16" height="14"><path d="M1 5h2l3-3v10L3 9H1zM8 5q1.500 2 0 4M10.500 3.500q3 3.500 0 7M13 2q4 5 0 10" fill="none" stroke="#fff"/></svg>
    <svg viewBox="0 0 22 14" width="22" height="14"><path d="M.500 1h21v12H.500z" fill="none" stroke="#fff"/><path d="M3 4.500h16M3 7h16M5 10.500h12" stroke="#fff" stroke-dasharray="2 1"/></svg>
    <svg viewBox="0 0 14 14" width="14" height="14"><path d="M1.500 3.500h11v5h-11zM7 1v12.500" fill="none" stroke="#fff" stroke-width="1.500"/></svg>
    <svg class="sg" viewBox="0 0 28 28" width="16" height="16"><use href="#sogou"/></svg>
    <span class="two clock">19:56<br>2018/1/4</span>
    <span class="note"><svg viewBox="0 0 16 16" width="18" height="18"><path d="M0 0h16v12H8l-3 3v-3H0z" fill="#fff"/><path d="M3 3h10M3 6h10M3 9h7" stroke="#111"/></svg><b>11</b></span>
  </div>
</footer>
</body>
</html>
```
FILE: styles.css
```css
* { box-sizing: border-box; }
html, body { height: 100%; margin: 0; }
body {
  display: flex; flex-direction: column; overflow: hidden; position: relative;
  background: #f0f0f0; color: #000;
  font: 12px/16px "Open Sans", "Noto Sans CJK SC", sans-serif;
}
.defs { position: absolute; width: 0; height: 0; }
svg { flex: none; display: block; }
button, input, select { font: inherit; color: inherit; margin: 0; padding: 0; border: 0; background: none; border-radius: 0; }
button { white-space: nowrap; }
button:disabled, select:disabled { color: #808080; opacity: 1; }
ul { list-style: none; margin: 0; padding: 0; }
.song { font-family: "Liberation Serif", "Noto Sans CJK SC", serif; }
.i11 { width: 11px; height: 11px; }
.i12 { width: 12px; height: 12px; }
.i15 { width: 15px; height: 15px; }
.i16 { width: 16px; height: 16px; }
.i18 { width: 18px; height: 16px; }

.titlebar { display: flex; align-items: center; height: 24px; flex: none; background: #fff; padding-left: 2px; }
.title { flex: 1; margin-left: 5px; color: #999; white-space: nowrap; font-family: Inter, "Noto Sans CJK SC", sans-serif; }
.win { width: 46px; height: 24px; display: flex; justify-content: center; align-items: center; }

.menubar { display: flex; align-items: center; height: 25px; flex: none; padding: 0 5px 0 7px; }
.menus { display: flex; gap: 12px; }
.extras { display: flex; align-items: center; gap: 8px; margin-left: 4px; }
.account { display: flex; align-items: center; gap: 9px; margin-left: auto; }
.account::before { content: ""; width: 22px; height: 22px; background: #f9f9f9; }
.tb { display: flex; align-items: center; gap: 4px; }
.caret { width: 5px; height: 3px; background: currentColor; clip-path: polygon(0 0, 100% 0, 50% 100%); flex: none; margin-left: -1px; }
.caret.wide { margin-left: 4px; }

.bars { display: flex; height: 30px; flex: none; gap: 2px; padding: 1px 0; }
.bar { display: flex; align-items: center; background: linear-gradient(#fdfdfd, #efefef); border-radius: 4px; gap: 8px; padding: 0 4px; white-space: nowrap; }
.bar-file { width: 151px; }
.bar-edit { width: 547px; }
.bar-view { flex: 1; gap: 6px; padding-left: 3px; }
.more { margin-left: auto; align-self: flex-start; font-size: 14px; line-height: 14px; font-weight: bold; }
.sep { width: 1px; height: 14px; background: #b4b4b4; flex: none; }
.sep.tall { height: 24px; background: #8c8c8c; }
.sigma { font-size: 14px; width: 13px; }
.combo { display: flex; align-items: center; background: #fff; }
.combo select { appearance: none; flex: 1; min-width: 0; }
.combo .caret { margin: 0 4px 0 0; }
.combo.dim { width: 62px; height: 23px; border: 1px solid #777; color: #808080; padding-left: 2px; gap: 2px; background: #f6f6f6; }

.work { display: flex; flex: 1; min-height: 0; gap: 6px; padding-top: 2px; }
.nav { width: 165px; flex: none; display: flex; flex-direction: column; }
.nav-head { display: flex; align-items: center; height: 17px; border: 1px solid #999; border-left: 0; padding-right: 3px; gap: 8px; }
.nav-head span { flex: 1; }
.nav-btn { height: 22px; border: 1px solid #a0a0a0; border-top-color: #fff; flex: none; background: #f0f0f0; }
.nav-tools { height: 28px; flex: none; padding: 6px; background: linear-gradient(#fdfdfd, #efefef); border: 1px solid #a0a0a0; border-width: 0 1px; }
.nav-tree { flex: 1; margin: 0 0 1px 1px; }
.tree { background: #fff; border: 1px solid #828790; padding-top: 1px; overflow: hidden; white-space: nowrap; }
.tree li { display: flex; align-items: center; height: 16px; }
.tree .l1 { padding-left: 7px; }
.chev { width: 10px; height: 9px; }
.dot { width: 3px; height: 1px; margin-left: 3px; background: repeating-linear-gradient(90deg, #888 0 1px, transparent 1px 2px); }
.fold { width: 16px; height: 14px; margin: 0 4px 0 1px; }
.comp-tree .l1 .i15 { margin: 0 5px 0 1px; }
.l2 { padding-left: 32px; background: repeating-linear-gradient(#888 0 1px, transparent 1px 2px) 12px 0 / 1px 100% no-repeat; }
.l2 span { padding-left: 5px; }
.stub { align-self: stretch; width: 11px; background: repeating-linear-gradient(90deg, #888 0 1px, transparent 1px 2px) 0 8px / 100% 1px no-repeat, repeating-linear-gradient(#888 0 1px, transparent 1px 2px) 0 0 / 1px 100% no-repeat; }
.stub.last { background-size: 100% 1px, 1px 50%; }
.l2 .hot { display: flex; background: #d9d9d9; padding: 0 4px 0 0; }

.right { flex: 1; min-width: 0; display: flex; flex-direction: column; }
.bar-comp { height: 28px; flex: none; gap: 7px; }
.floor { display: flex; align-items: center; gap: 6px; margin: 0 -2px 0 -5px; }
.combo.plain { width: 62px; height: 20px; }
.combo.plain .caret, .combo.rb .caret { margin-right: 3px; }
.move { gap: 9px; }
.panes { display: flex; flex: 1; min-height: 0; gap: 3px; }
.complist { width: 184px; flex: none; display: flex; flex-direction: column; }
.search { display: flex; height: 30px; padding: 4px 0 2px 1px; flex: none; background: #fff; }
.search input { width: 157px; border: 1px solid #7a7a7a; padding-left: 2px; }
.search input::placeholder { color: #808080; }
.search button { flex: 1; display: flex; justify-content: center; align-items: center; }
.comp-tree { flex: 1; margin-bottom: 1px; }
.c2 { padding-left: 31px; }
.c2 .stub { width: 9px; }
.c2 span { display: flex; align-items: center; gap: 7px; padding: 0 3px 0 4px; height: 16px; }
.c2 .sel { background: #316ac5; }

.props { flex: 1; min-width: 0; display: flex; flex-direction: column; align-items: stretch; padding-right: 2px; }
.ptab { align-self: flex-start; height: 22px; padding: 0 7px; background: #fff; border: 1px solid #d9d9d9; border-bottom: 0; }
.ppanel { flex: 1; background: #fff; border: 1px solid #d9d9d9; padding: 2px 3px 3px; display: flex; margin-bottom: 2px; }
.pbox { flex: 1; border: 1px solid #a0a0a0; padding: 1px 1px 1px 0; display: flex; justify-content: space-between; align-items: flex-start; }
table { border-collapse: collapse; table-layout: fixed; width: 338px; }
th { font-weight: normal; }
td, th { border: 1px solid #c0c0c0; height: 19px; padding: 0 2px; line-height: 16px; white-space: nowrap; overflow: hidden; text-align: left; }
thead th { height: 22px; text-align: center; background: linear-gradient(#fff, #ececec); border-top: 0; }
.n { width: 21px; }
.k { width: 191px; }
thead .v { background: linear-gradient(#f9d9a0, #f0bf62); color: #600060; }
tbody th { background: #f3f3f3; text-align: center; padding: 0; font-family: "Open Sans", sans-serif; border-left: 0; }
td:nth-child(2) { padding-left: 19px; }
.cur th { background: #ffd58d; color: #600060; }
.cur td { background: #d9eaf9; }
.cur td:nth-child(2) { background: #0078d7; color: #fff; }
.blue td:nth-child(2) { color: #00f; }
.gray td { color: #808080; }
.grp td:nth-child(2) { padding-left: 2px; }
.grp button { width: 13px; height: 13px; border: 1px solid #b0b0b0; color: #000; line-height: 10px; margin-right: 4px; font-family: "Open Sans", sans-serif; }
.rebar { display: inline-block; width: 11px; height: 10px; vertical-align: middle; }
.vscroll { width: 16px; align-self: stretch; background: #f0f0f0; display: flex; align-items: flex-end; justify-content: center; padding-bottom: 4px; }

.status { display: flex; height: 22px; flex: none; gap: 2px; padding: 2px 0 0; }
.status span { border: 1px solid #d4d4d4; background: linear-gradient(#fcfcfc, #efefef); line-height: 18px; padding-left: 1px; white-space: nowrap; }
.s1 { width: 148px; }
.s2 { width: 78px; }
.s3 { width: 98px; }
.s4 { width: 48px; }
.s5 { flex: 1; }
.s6 { width: 70px; }

.dialog { position: absolute; left: 630px; right: 1px; top: 99px; bottom: 98px; display: flex; flex-direction: column; background: #b9d1ea; border: 1px solid #24323f; border-right: 0; box-shadow: inset 0 -1px #4cc8ec, inset 1px 1px #eaf2fa; padding: 1px 0 6px 7px; }
.dialog h2 { margin: 0 0 0 -6px; padding: 6px 0 0 6px; height: 29px; flex: none; font-size: 12px; font-weight: normal; line-height: 24px; background: linear-gradient(#99b4d1, #b9d1ea); }
.dbody { flex: 1; min-height: 0; display: flex; flex-direction: column; background: #f0f0f0; }
.dtabs { display: flex; align-items: flex-end; padding-left: 2px; height: 21px; flex: none; border-bottom: 1px solid #d9d9d9; }
.dtabs button { height: 19px; padding: 3px 16px 0 5px; border: 1px solid #d9d9d9; border-bottom: 0; line-height: 15px; }
.dtabs .on { height: 21px; margin-bottom: -1px; padding: 0 19px 1px 6px; background: #fff; border-left: 0; }
.dpage { flex: 1; min-height: 0; display: flex; flex-direction: column; background: #fff; padding-top: 4px; }
.dbar { display: flex; align-items: center; gap: 10px; margin-left: 4px; padding-left: 4px; flex: none; white-space: nowrap; }
.dbar.top { height: 27px; background: linear-gradient(#fcfcfc, #f0f0f0); border-top: 1px solid #ececec; }
.dbar.low { height: 28px; gap: 2px; background: #f2f2f2; color: #808080; }
.grip { width: 2px; height: 16px; margin-right: -3px; background: repeating-linear-gradient(#b8b8b8 0 2px, transparent 2px 4px); }
.low .grip { margin-right: 4px; }
.dbar .sep { margin: 0 -3px; }
.combo.rb { width: 132px; height: 23px; border: 1px solid #7a7a7a; padding-left: 1px; background: #f3f3f3; }
.canvas { flex: 1; min-height: 0; margin: 1px 0 0 5px; border: 2px solid #f00; border-right: 0; background: #000; overflow: hidden; }
.canvas svg { width: 100%; height: 100%; }
.axis path { fill: none; stroke: #303030; stroke-dasharray: 9 3 3 3; }
.axis .mid { stroke: #5c5c5c; }
.outline { fill: none; stroke: #fff; stroke-width: 2; }
.leader { stroke: #fff; }
.dim path { fill: none; stroke: #0f0; stroke-width: 2; }
.steel path { fill: none; stroke: #f00; stroke-width: 3; }
.dots circle { fill: #000; stroke-width: 1; }
.dots.y circle { stroke: #ff0; }
.dots.c circle { stroke: #0ff; }
.num { font: 20px "Liberation Serif", serif; fill: #fff; }
.lab { font: 300 19px "Noto Sans CJK SC", sans-serif; fill: #fff; }
.val { font: 18px "Liberation Serif", serif; fill: #0f0; }
.dstatus { display: flex; gap: 2px; height: 27px; flex: none; padding-top: 5px; background: #f0f0f0; }
.dstatus span { border: 1px solid #d4d4d4; flex: 1; background: linear-gradient(#fcfcfc, #efefef); }
.dstatus span:first-child { flex: 0 0 148px; padding-left: 8px; line-height: 20px; white-space: pre; }

.ball { position: absolute; left: 862px; top: -26px; width: 44px; height: 44px; border-radius: 50%; border: 2px solid #dfe5df; background: linear-gradient(#2ea84a, #43c763); box-shadow: 0 1px 4px #666; color: #fff; font-weight: bold; text-align: center; padding-top: 23px; }
.ime { position: absolute; left: 910px; top: 3px; height: 24px; width: 207px; display: flex; align-items: center; justify-content: space-between; padding-right: 4px; background: #fff; border: 1px solid #b9cfe6; border-left: 0; }

.taskbar { display: flex; height: 40px; flex: none; background: #010b10; color: #fff; }
.start { width: 48px; background: #000; display: flex; align-items: center; justify-content: center; }
.tsearch { width: 344px; background: #333; display: flex; align-items: center; padding: 0 14px 0 9px; gap: 5px; }
.tsearch input { flex: 1; min-width: 0; font-size: 14px; line-height: 20px; }
.tsearch input::placeholder { color: #9a9a9a; }
.apps { display: flex; gap: 2px; }
.apps button { width: 48px; display: flex; align-items: center; justify-content: center; border-bottom: 2px solid transparent; }
.apps .run { border-image: linear-gradient(90deg, transparent 4px, #76b9ed 4px 44px, transparent 44px) 2; border-width: 0 0 2px; border-style: solid; }
.apps .on { background: #333e43; border-image: none; border-color: #76b9ed; }
.tray { display: flex; align-items: center; gap: 10px; margin-left: auto; padding-right: 16px; }
.link { margin-right: 8px; }
.two { text-align: center; line-height: 18px; margin-right: 6px; }
.sg { margin-left: 4px; }
.clock { margin: 0 12px; }
.note { position: relative; width: 26px; }
.note b { position: absolute; left: 5px; top: 7px; width: 20px; height: 16px; border-radius: 8px; background: #333; border: 1px solid #999; text-align: center; line-height: 14px; }
```
